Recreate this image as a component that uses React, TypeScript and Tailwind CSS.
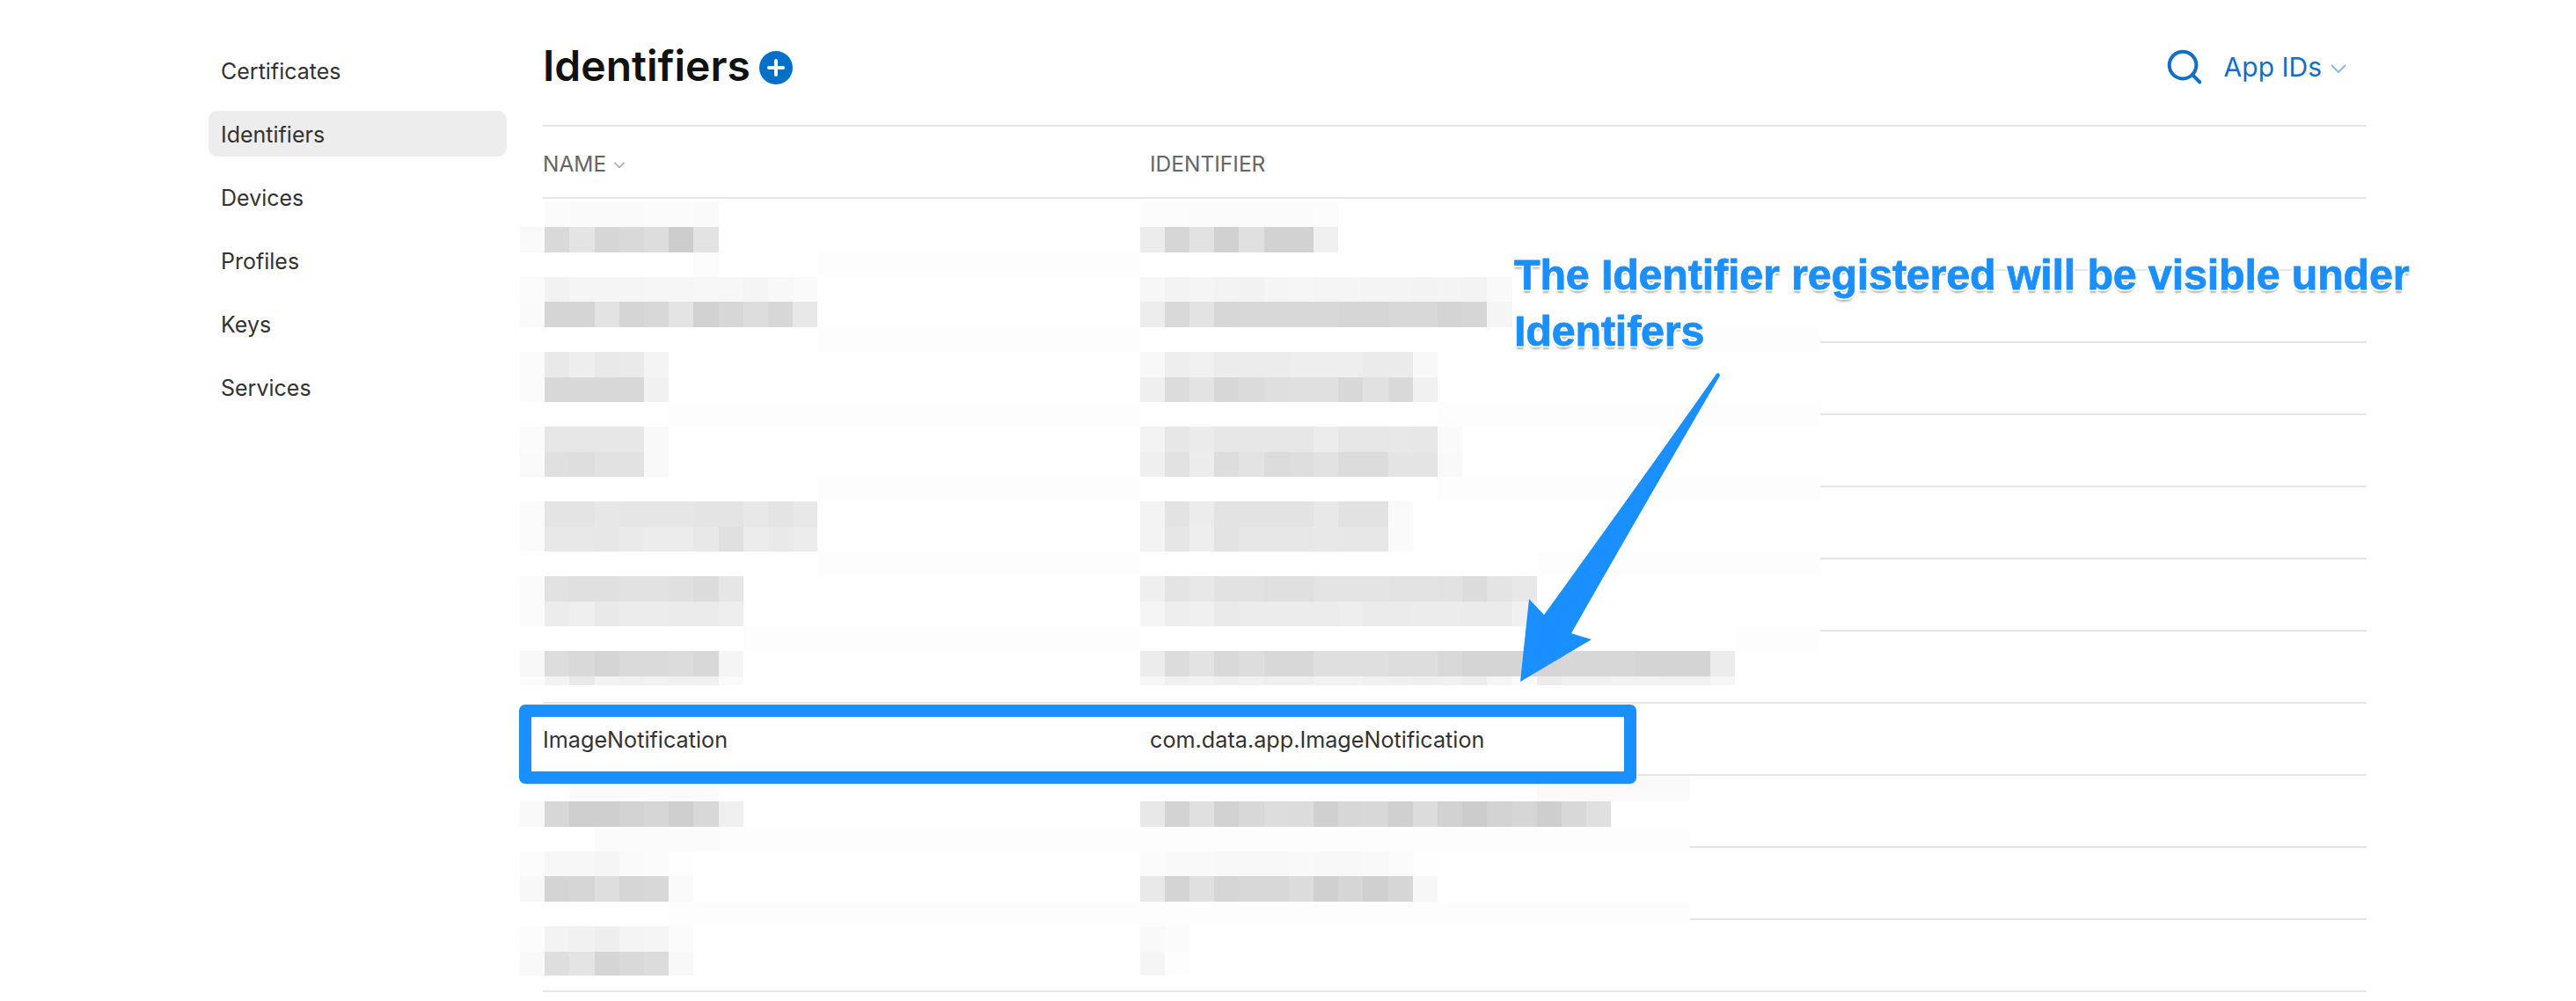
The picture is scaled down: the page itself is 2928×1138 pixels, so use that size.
import { Search } from "lucide-react";

const navItems = ["Certificates", "Identifiers", "Devices", "Profiles", "Keys", "Services"];

// hex grey per mosaic cell, name column then identifier column
const row = (name: string, id = "") => {
  const a = name ? name.split(" ") : [];
  const b = id ? id.split(" ") : [];
  return [...a, ...Array(25 - a.length).fill("ff"), ...b];
};

const band = (...ranges: [number, number, string?][]) => {
  const cells: string[] = Array(53).fill("ff");
  ranges.forEach(([from, to, c]) => {
    for (let i = from; i < to; i++) cells[i] = c ?? "fd";
  });
  return cells;
};

const upperRows = [
  row("ff fb fa fa fa fb fb fa", "fc fc fb fb fb fb fb fc"),
  row("fa d9 e4 d6 d9 dd cd e3", "ec d6 e2 d1 e0 d2 d2 f0"),
  band([7, 8, "fc"], [12, 25], [40, 53]),
  row("fb f2 f5 f5 f5 f6 f6 f7 f7 f5 f8 fa", "f7 f3 f5 f3 f2 f5 f6 f5 f5 f4 f4 f3 f4 f3 f9"),
  row("fa d5 d5 e3 d5 d8 e4 d2 d7 dd d7 e8", "ed d9 e3 d7 d8 d8 d8 d8 d6 d6 d8 d8 d4 d6 f5"),
  band([12, 25], [40, 53]),
  row("fb e9 ee e9 ea f4", "f8 ee f1 ec ec ec ee ee ee eb eb f8"),
  row("fb d8 d8 d8 d8 f1", "ef dc e3 d7 db df e0 e0 d8 e1 d9 f1"),
  band([6, 25], [37, 53]),
  row("fb e7 e7 e7 e7 f9", "f3 e7 eb e7 e7 e7 e7 ec e7 e7 e8 e7 fa"),
  row("fa e0 de e2 e2 f9", "ef e2 ec dd e3 dc de e2 dc dc e4 e4 f9"),
  band([12, 25], [37, 53]),
  row("fb e4 e4 e7 e6 e6 e6 e4 e4 e8 e4 e8", "f3 e3 ec e3 e3 e3 e3 e8 e2 e2 fa"),
  row("fb e8 e8 e7 ea ec ec e8 e0 ec e9 ec", "f3 e6 ee e3 e7 e7 e7 e8 e7 e7 fa"),
  band([12, 25], [41, 53]),
  row("fb e2 e0 e0 e2 e2 e0 dc e6", "ef e4 e8 e2 e2 e0 e0 e4 e4 e4 e3 e3 e2 dc e4 e8"),
  row("fb ec ef e9 ec ec eb eb ee", "f5 ee f0 ea ec ec ec ec ee eb eb ec ec eb eb f0"),
  band([9, 25], [49, 53]),
  row("f8 dd d9 d5 da da dc d8 f5", "ec dc e3 d9 dd d8 d8 df df df dd dd d9 d5 d5 d5 d5 d7 d7 d7 d4 d4 d4 ec"),
  row("fb f3 e9 f3 f1 f2 f0 f0 fa", "f6 f0 f3 ef f1 ef ef f2 f2 f0 f0 ef f0 ed f5 fb ec f0 f0 f2 f2 f0 f0 f6"),
];

const lowerRows = [
  band([2, 8, "fb"], [41, 49, "fa"]),
  row("f9 d7 cf cf d3 d6 cf d8 f0", "e8 d3 e0 d2 d8 dd dc d0 d7 d8 d0 dc d2 cc d3 d6 ce d8 e0"),
  band([3, 8, "fb"], [8, 53]),
  row("fc f7 f7 f5 fa fb fe", "fb f9 f9 f8 f8 f8 f9 f8 f8 f9 fb fe"),
  row("f8 d4 d6 de d6 d8 fa", "e9 d4 e0 d6 d8 d8 dc d0 d6 d0 d6 f7"),
  band([6, 53]),
  row("fc f3 f1 ee f4 f5 fb", "f9 fb"),
  row("f9 de e4 d5 d9 dc f8", "f5 fd"),
];

function Mosaic({ rows, className }: { rows: string[][]; className: string }) {
  return (
    <div className={`absolute left-[591px] overflow-hidden bg-white ${className}`}>
      {rows.map((cells, r) => (
        <div key={r} className="flex h-[28.37px]">
          {cells.map((c, i) => (
            <div key={i} className="h-full w-[28.2px] shrink-0" style={{ backgroundColor: `#${c}${c}${c}` }} />
          ))}
        </div>
      ))}
    </div>
  );
}

function Row({ name, id }: { name?: string; id?: string }) {
  return (
    <div className="flex h-[82px] items-center border-b-2 border-[#e6e6e6] pt-1 text-[25.2px] text-[#333]">
      <div className="w-[690px]">{name}</div>
      <div>{id}</div>
    </div>
  );
}

export default function App() {
  return (
    <div
      className="relative h-[1138px] overflow-hidden bg-white"
      style={{ fontFamily: "Inter, 'Noto Sans', sans-serif" }}
    >
      <div className="flex pl-[237px]">
        <nav className="flex w-[339px] shrink-0 flex-col gap-5 pt-[54px]">
          {navItems.map((item) => (
            <div
              key={item}
              className={`flex h-[52px] items-center rounded-[10px] px-3.5 pt-1 text-[25px] text-[#333] ${
                item === "Identifiers" ? "bg-[#ededed]" : ""
              }`}
            >
              {item}
            </div>
          ))}
        </nav>

        <main className="ml-[41px] w-[2073px]">
          <div className="flex h-[144px] items-start justify-between border-b-2 border-[#e6e6e6] pt-[44px]">
            <div className="flex items-center gap-[10px]">
              <h1 className="text-[48px] leading-[62px] font-semibold text-[#111]">Identifiers</h1>
              <svg viewBox="0 0 38 38" className="mt-1 h-[38px] w-[38px]">
                <circle cx="19" cy="19" r="19" fill="#0070c9" />
                <path d="M19 11v16M11 19h16" stroke="#fff" strokeWidth="4" strokeLinecap="round" />
              </svg>
            </div>
            <div className="flex items-center pt-[8px] text-[#0f70c7]">
              <Search className="h-[46px] w-[46px]" strokeWidth={2.1} />
              <span className="ml-[22px] pt-0.5 text-[30px]">App IDs</span>
              <svg viewBox="0 0 18 10" className="mt-1 ml-[10px] h-[10px] w-[18px]">
                <path d="M1 1l8 8 8-8" fill="none" stroke="#8db8e4" strokeWidth="2" />
              </svg>
              <div className="w-[23px]" />
            </div>
          </div>

          <div className="flex h-[82px] items-center border-b-2 border-[#e6e6e6] pt-1 text-[24.5px] text-[#666]">
            <div className="flex w-[690px] items-center gap-2">
              NAME
              <svg viewBox="0 0 16 10" className="mt-1 h-[8px] w-[14px]">
                <path d="M1 1l7 7 7-7" fill="none" stroke="#aaa" strokeWidth="2" />
              </svg>
            </div>
            <div>IDENTIFIER</div>
          </div>

          {Array.from({ length: 7 }, (_, i) => (
            <Row key={i} />
          ))}
          <Row name="ImageNotification" id="com.data.app.ImageNotification" />
          {Array.from({ length: 3 }, (_, i) => (
            <Row key={i} />
          ))}
        </main>
      </div>

      <Mosaic rows={upperRows} className="top-[230px] h-[549px] w-[1478px]" />
      <Mosaic rows={lowerRows} className="top-[883px] h-[226px] w-[1330px]" />

      <div className="absolute top-[801px] left-[590px] h-[90px] w-[1270px] rounded-[7px] border-[14px] border-[#1a8fff]" />

      <div className="absolute top-[280px] left-[1721px] w-[1060px] text-[48.5px] leading-[64px] font-bold tracking-[-0.2px] text-[#1a8fff] [-webkit-text-stroke:0.8px_#1a8fff] [font-family:'Liberation_Sans',Arial,sans-serif] [text-shadow:2px_0_1px_#fff,-2px_0_1px_#fff,0_-2px_1px_#fff,0_2px_1px_#fff,2px_2px_1px_#fff,-2px_2px_1px_#fff,2px_-2px_1px_#fff,-2px_-2px_1px_#fff,0_4px_2px_#aaa]">
        The Identifier registered will be visible under
        <br />
        Identifers
      </div>

      <svg className="absolute top-[420px] left-[1720px] h-[360px] w-[240px]" viewBox="1720 420 240 360">
        <path
          d="M1951 425Q1954 422 1955 427Q1860 590 1786 720L1809 727L1728 775L1738 681L1755 699Q1870 540 1951 425Z"
          fill="#1a8fff"
        />
      </svg>
    </div>
  );
}
